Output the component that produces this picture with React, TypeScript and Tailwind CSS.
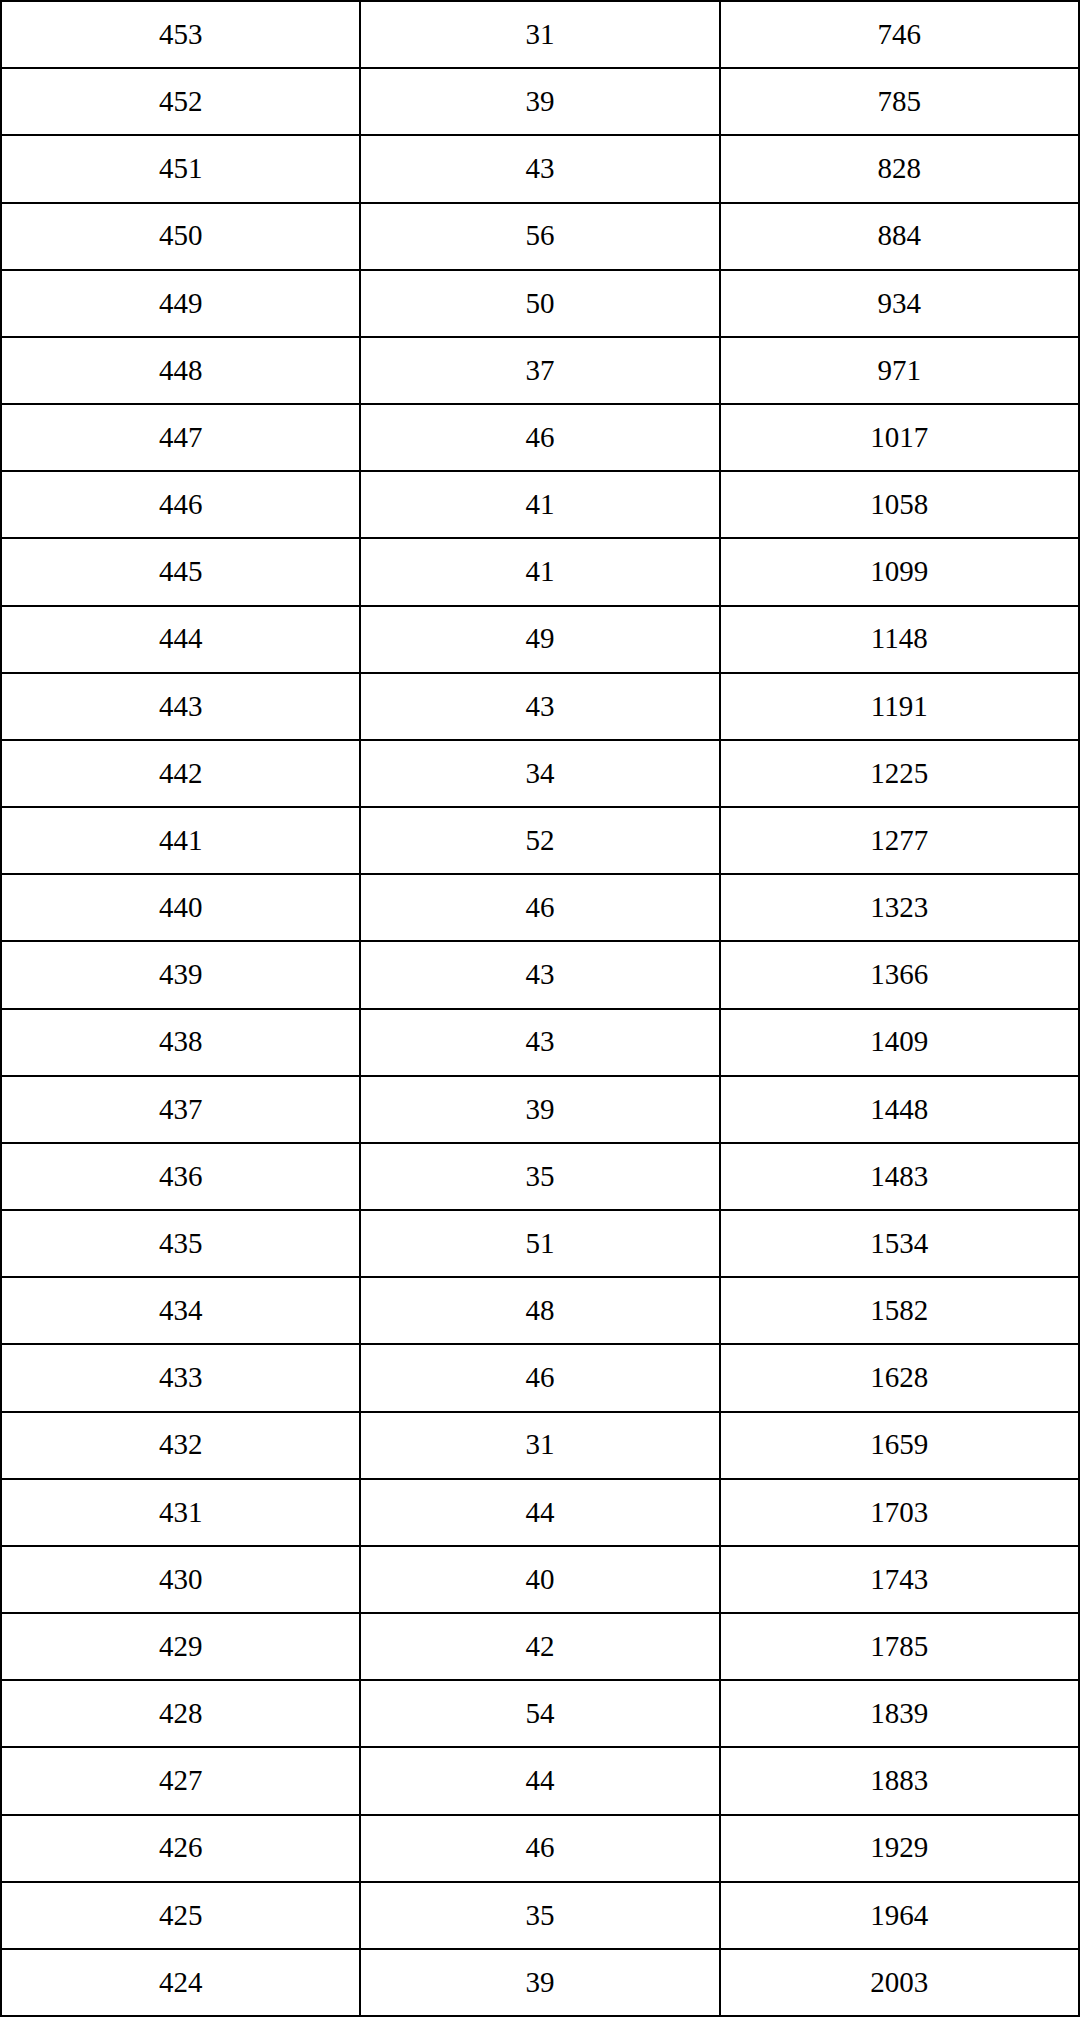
const rows: [number, number, number][] = [
  [453, 31, 746],
  [452, 39, 785],
  [451, 43, 828],
  [450, 56, 884],
  [449, 50, 934],
  [448, 37, 971],
  [447, 46, 1017],
  [446, 41, 1058],
  [445, 41, 1099],
  [444, 49, 1148],
  [443, 43, 1191],
  [442, 34, 1225],
  [441, 52, 1277],
  [440, 46, 1323],
  [439, 43, 1366],
  [438, 43, 1409],
  [437, 39, 1448],
  [436, 35, 1483],
  [435, 51, 1534],
  [434, 48, 1582],
  [433, 46, 1628],
  [432, 31, 1659],
  [431, 44, 1703],
  [430, 40, 1743],
  [429, 42, 1785],
  [428, 54, 1839],
  [427, 44, 1883],
  [426, 46, 1929],
  [425, 35, 1964],
  [424, 39, 2003],
];

export default function App() {
  return (
    <div className="w-[1080px] h-[2017px] bg-white flex flex-col border-t-2 border-l-2 border-black font-['Liberation_Serif','Noto_Sans_CJK_SC',serif] text-[29px] text-black">
      {rows.map((r) => (
        <div key={r[0]} className="flex-1 grid grid-cols-3 border-b-2 border-black">
          {r.map((v, i) => (
            <div key={i} className="flex items-center justify-center border-r-2 border-black">
              {v}
            </div>
          ))}
        </div>
      ))}
    </div>
  );
}
